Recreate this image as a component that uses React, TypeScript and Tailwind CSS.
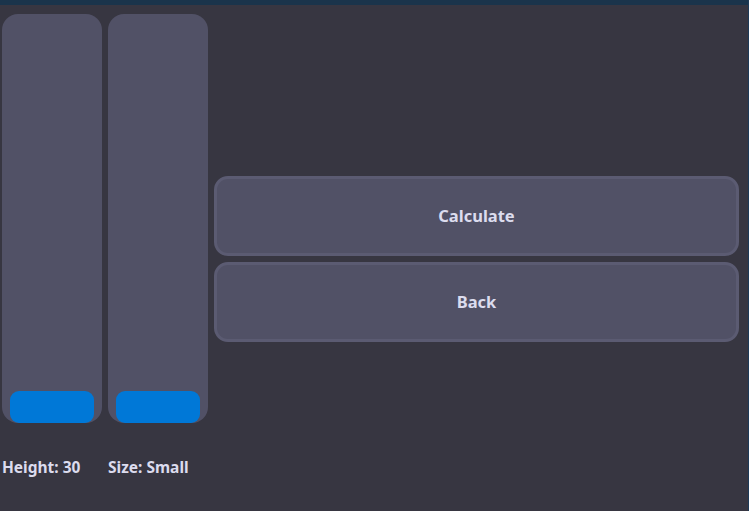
export default function App() {
  const sliders = [
    { label: 'Height: 30' },
    { label: 'Size: Small' },
  ]

  return (
    <div className="w-[749px] h-[511px] bg-[#373641] flex flex-col overflow-hidden font-['Noto_Sans',sans-serif] border-r border-[#1d3a57]">
      {/* top strip */}
      <div className="h-[5px] bg-[#1a344b] shrink-0" />

      <div className="flex flex-1 pt-[9px] pl-[2px] pr-[9px]">
        {/* sliders */}
        <div className="flex gap-[6px]">
          {sliders.map((s) => (
            <div key={s.label} className="flex flex-col w-[100px]">
              <div className="h-[409px] rounded-[16px] bg-[#515166] flex flex-col justify-end px-[8px] overflow-hidden">
                <div className="h-[32px] rounded-[9px] bg-[#0078d7]" />
              </div>
              <div className="mt-[34px] text-[15.5px] leading-[20px] font-bold text-[#dcdcee] whitespace-nowrap">
                {s.label}
              </div>
            </div>
          ))}
        </div>

        {/* buttons */}
        <div className="flex-1 flex flex-col gap-[6px] ml-[6px] pt-[162px]">
          <button className="h-[80px] rounded-[14px] bg-[#515166] border-[3px] border-[#5b5b72] text-[16.5px] font-bold text-[#dcdcee]">
            Calculate
          </button>
          <button className="h-[80px] rounded-[14px] bg-[#515166] border-[3px] border-[#5b5b72] text-[16.5px] font-bold text-[#dcdcee]">
            Back
          </button>
        </div>
      </div>
    </div>
  )
}
